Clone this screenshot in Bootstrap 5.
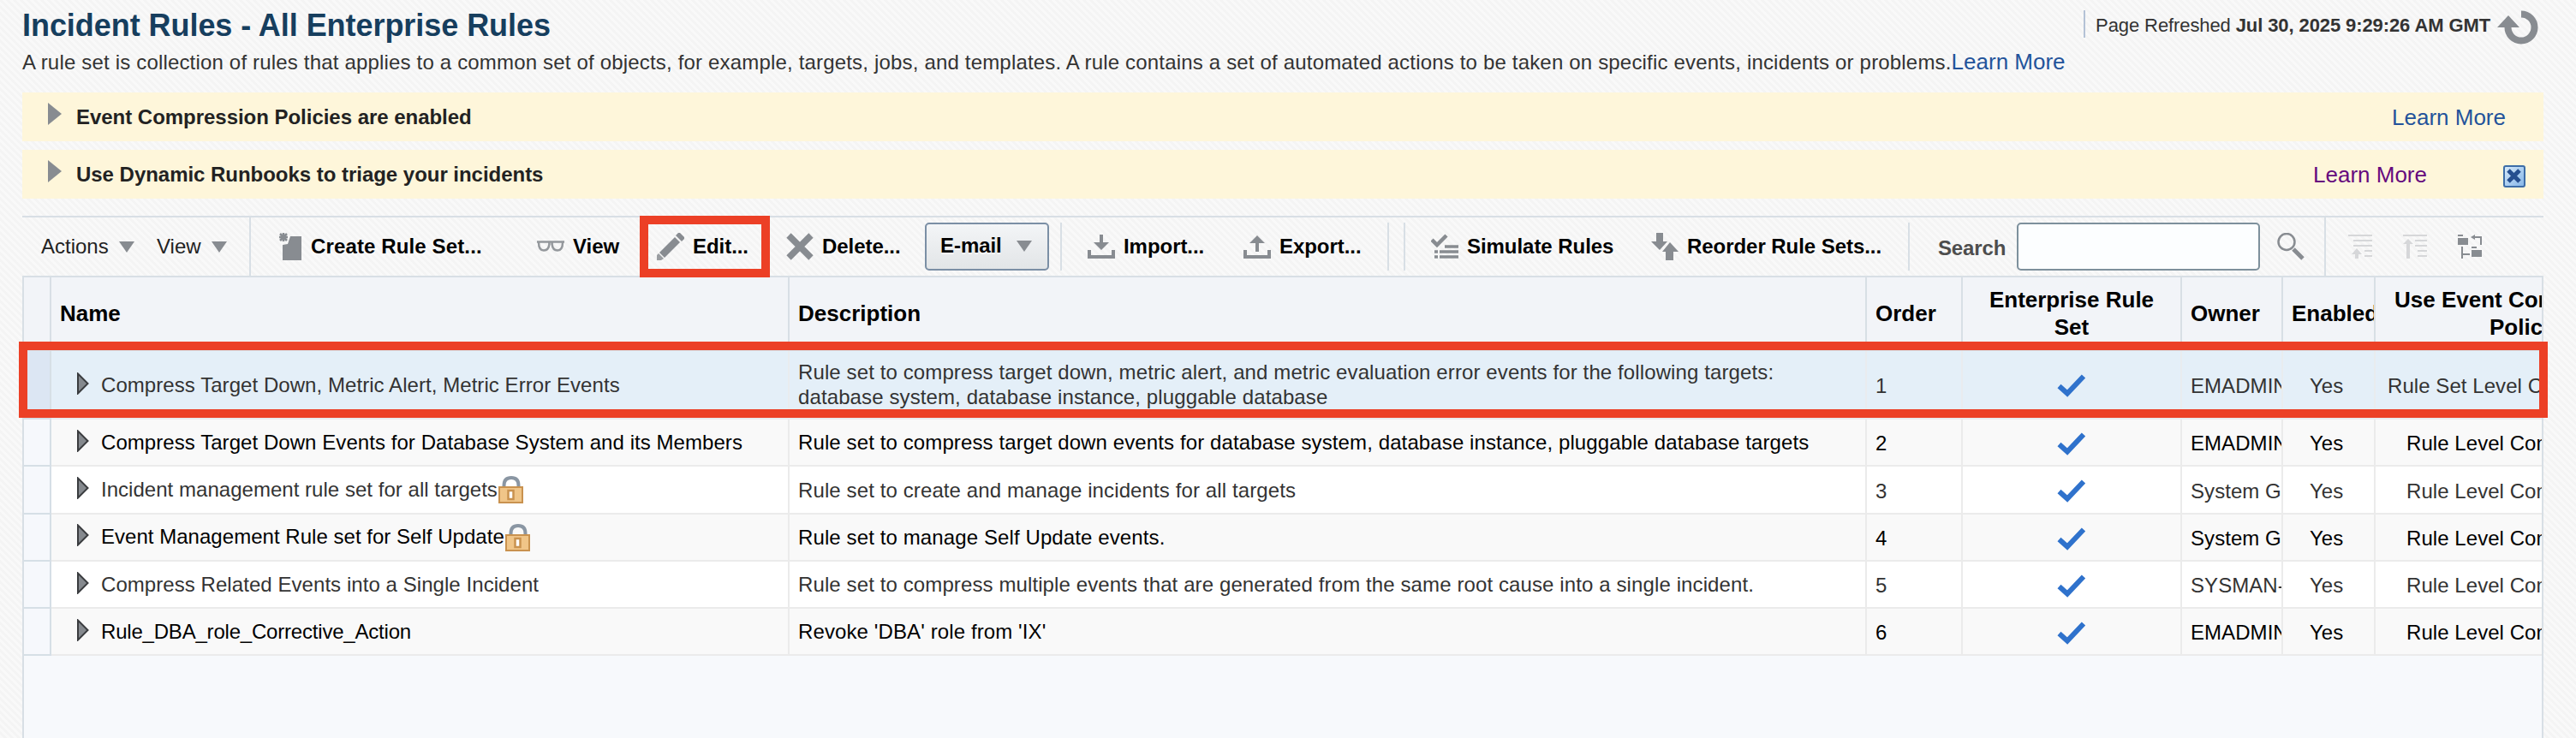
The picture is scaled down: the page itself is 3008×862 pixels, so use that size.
<!DOCTYPE html>
<html lang="en">
<head>
<meta charset="utf-8">
<title>Incident Rules - All Enterprise Rules</title>
<link rel="stylesheet" href="https://cdn.jsdelivr.net/npm/bootstrap@5.3.0/dist/css/bootstrap.min.css">
<style>
  body { width: 3008px; height: 862px; overflow: hidden; font: 24px/30px "Liberation Sans", Arial, sans-serif; color: #333;
    background: repeating-linear-gradient(45deg, #f9f9f9 0 2.83px, #f4f4f4 2.83px 5.66px); }
  a { text-decoration: none; color: #23539b; font-size: 26px; }
  a.visited { color: #660b7e; }
  svg { display: block; flex: none; }
  .page { padding: 0 38px 0 26px; height: 862px; }
  .page-head { height: 54px; padding-top: 10px; }
  .page-title { font-size: 36px; line-height: 40px; color: #163e5e; letter-spacing: -.05px; }
  .refreshed { font-size: 22px; height: 32px; margin: 2px 2px 0 0; padding-left: 12px; border-left: 2px solid #b4c2d6; letter-spacing: -.1px; }
  .refreshed > span { line-height: 30px; margin-top: 3px; white-space: pre; }
  .intro { height: 54px; padding-top: 3px; white-space: nowrap; }
  .intro span { letter-spacing: .177px; }
  .notice { height: 57px; background: #fef6da; padding-left: 30px; margin-bottom: 10px; color: #222; }
  .notice b { margin-left: 17px; letter-spacing: -.03px; }
  .notice svg.tri { margin-bottom: 8px; }
  .toolbar-grid { display: grid; height: 72px; margin-top: 20px; padding-left: 22px; border-top: 2px solid #d8dfe5; border-bottom: 2px solid #d8dfe5; color: #000; align-items: center; white-space: nowrap;
    grid-template-columns: 135px 108px 29px 307px 140px 151px 162px 158px 32px 182px 168px 19px 32px 257px 300px 35px 92px 304px 55px 27px 64px 65px 1fr; }
  .tool { display: flex; align-items: center; gap: 10px; font-weight: 700; letter-spacing: -.05px; text-shadow: 0 2px 0 #fff; }
  .tool-create { letter-spacing: .13px; gap: 11px; }
  .tool-menu { display: flex; align-items: center; gap: 12px; color: #222; }
  .rule-v { width: 2px; height: 56px; background: #d8dfe5; }
  .rule-full { height: 68px; }
  .mail-btn { width: 145px; height: 56px; border: 2px solid #7b8fa5; border-radius: 5px; padding: 0 18px 2px 16px; background: linear-gradient(#f3f5f7, #e2e5e7); justify-content: space-between; }
  .search-box { width: 284px; height: 56px; border: 2px solid #7d909c; border-radius: 5px; background: #fcfeff; padding: 0 8px; }
  .search-label { color: #4d4d4d; font-weight: 700; padding-top: 4px; letter-spacing: -.15px; }
  .frame { position: absolute; border: 10px solid #ec4026; pointer-events: none; }
  .frame-edit { left: -20px; top: -20px; width: 152px; height: 72px; }
  .frame-row { left: -4px; top: 75px; width: 2953px; height: 89px; }
  .rules-box { border: solid #d8dfe5; border-width: 0 2px; background: #f7f9fc; height: 538px; overflow: hidden; }
  .rules { width: 2940px; table-layout: fixed; border-collapse: separate; border-spacing: 0; margin: 0; }
  .rules th, .rules td { padding: 0 0 0 10px; overflow: hidden; white-space: nowrap; vertical-align: middle; border-right: 2px solid #ebebeb; border-bottom: 2px solid #ebebeb; }
  .rules th { height: 86px; font-size: 26px; line-height: 32px; color: #000; background: #f2f4f8; border-color: #d8dfe5; }
  .rules td { height: 55px; line-height: 29px; background: #fff; letter-spacing: .06px; }
  .rules td:first-child { background: #f6f8fc; border-color: #d6dfe6; }
  .rules td.about { letter-spacing: .11px; }
  .rules tr > :last-child { border-right: 0; }
  .rules tr.alt td { color: #000; background: #f9f9f9; }
  .rules tr.alt td:first-child { background: #f6f8fc; }
  .rules tr.sel td { height: 80px; background: #e4eff8; border-color: #e9ecef; }
  .rules tr.sel td:first-child { background: #dce6f3; border-color: #d6dfe6; }
  .rules tr.tall td { height: 56px; }
  .rules td.num { padding-top: 2px; }
  .rules td.pick { padding: 3px 0 0 110px; }
  .rules td.name { padding-left: 30px; }
  .rules tr.locked td.name { padding-bottom: 2px; letter-spacing: .03px; }
  .rules tr.locked .lk { margin-top: 2px; }
  .rules tr:last-child td.name { letter-spacing: -.2px; }
  .rules td.yes { padding: 2px 0 0 31px; }
  .rules td.pol { padding: 2px 0 0 36px; }
  .rules tr.sel td.pol { padding-left: 14px; }
  .name-in { display: flex; align-items: center; gap: 14px; }
  .name-in .tri { margin-bottom: 3px; }
  .name-in .lk { margin-left: -13px; }
  #learn-policies { margin-right: 44px; }
  #learn-runbooks { margin-right: 89px; }
  #close-note { margin: 5px 21px 0 0; }
  #th-policy { padding-left: 22px; }
  #th-policy span { margin-left: 111px; }
</style>
</head>
<body>
<svg class="d-none">
  <symbol id="tri" viewBox="0 0 14 26"><path d="M1 1.5V24.5L12.5 13Z" fill="#85898e" stroke="#3a3c3f" stroke-width="2"/></symbol>
  <symbol id="grey" viewBox="0 0 16 26"><path d="M0 0V26L16 13Z" fill="#888c91"/></symbol>
  <symbol id="down" viewBox="0 0 18 13"><path d="M0 0H18L9 13Z" fill="#888c91"/></symbol>
  <symbol id="check" viewBox="0 0 34 27"><path d="M2.5 14L12 22.5L31 2.5" fill="none" stroke="#2f72cc" stroke-width="6"/></symbol>
  <symbol id="lock" viewBox="0 0 30 32"><path d="M6.5 13V11Q6.5 2 15 2T23.500 11V13" fill="none" stroke="#8a96a3" stroke-width="4"/><path d="M1 13H28V31H1Z" fill="#f0c588" stroke="#c9924f" stroke-width="2"/><path d="M11.500 17H17.500V27H11.500Z" fill="#fff" stroke="#c9924f" stroke-width="2.500"/></symbol>
</svg>
<main class="page">
  <header class="page-head d-flex justify-content-between">
    <h1 class="page-title fw-bold mb-0">Incident Rules - All Enterprise Rules</h1>
    <div class="refreshed d-flex">
      <span>Page Refreshed <b>Jul 30, 2025 9:29:26 AM GMT</b></span>
      <svg width="48" height="40" viewBox="0 0 48 40" class="ms-2 me-1"><path d="M28 4.500A15.500 15.500 0 1 1 12.500 20" fill="none" stroke="#888c91" stroke-width="8"/><path d="M0 20H26L13 6Z" fill="#888c91"/></svg>
    </div>
  </header>
  <p class="intro mb-0"><span>A rule set is collection of rules that applies to a common set of objects, for example, targets, jobs, and templates. A rule contains a set of automated actions to be taken on specific events, incidents or problems.</span><a href="#">Learn More</a></p>
  <section class="notice d-flex align-items-center">
    <svg class="tri" width="16" height="26"><use href="#grey"/></svg><b>Event Compression Policies are enabled</b>
    <a href="#" class="ms-auto" id="learn-policies">Learn More</a>
  </section>
  <section class="notice d-flex align-items-center">
    <svg class="tri" width="16" height="26"><use href="#grey"/></svg><b>Use Dynamic Runbooks to triage your incidents</b>
    <a href="#" class="visited ms-auto" id="learn-runbooks">Learn More</a>
    <svg id="close-note" width="26" height="26" viewBox="0 0 26 26"><defs><linearGradient id="cg" x1="0" y1="0" x2="1" y2="1"><stop offset="0" stop-color="#d9ebfa"/><stop offset="1" stop-color="#83b5e8"/></linearGradient></defs><rect x="1" y="1" width="24" height="24" rx="2" fill="url(#cg)" stroke="#3c6da8" stroke-width="2"/><path d="M6 6L19 19M19 6L6 19" stroke="#264f8f" stroke-width="5"/></svg>
  </section>
  <nav class="toolbar-grid">
    <span class="tool-menu">Actions<svg width="18" height="13"><use href="#down"/></svg></span>
    <span class="tool-menu">View<svg width="18" height="13"><use href="#down"/></svg></span>
    <i class="rule-v rule-full"></i>
    <span class="tool tool-create"><svg width="32" height="32" viewBox="0 0 32 32" fill="#888c91"><path d="M19 4H32V32H10V14L16 13Z"/><path d="M11 0V10M6 5H16M7 1L15 9M15 1L7 9" stroke="#888c91" stroke-width="2.500"/></svg>Create Rule Set...</span>
    <span class="tool"><svg width="32" height="32" viewBox="0 0 32 32" fill="none" stroke="#94989c" stroke-width="2.500"><path d="M0 10.500H32M2 11C2 17 4 20.500 8 20.500S14 17 14.500 13Q14.500 11 13 11M30 11C30 17 28 20.500 24 20.500S18 17 17.500 13Q17.500 11 19 11"/></svg>View</span>
    <span class="tool position-relative"><svg width="32" height="32" viewBox="0 0 32 32" fill="#888c91"><path d="M3 23L21 5L27 11L9 29Z"/><path d="M22 3L25 0H27L32 5V7L29 10Z"/><path d="M0 32V26L2 24L8 30L5 32Z" fill="#9a9da1"/></svg>Edit...<i class="frame frame-edit"></i></span>
    <span class="tool"><svg width="32" height="32" viewBox="0 0 32 32"><path d="M3 3L29 29M29 3L3 29" stroke="#888c91" stroke-width="7.500"/></svg>Delete...</span>
    <span class="tool mail-btn">E-mail<svg width="18" height="13"><use href="#down"/></svg></span>
    <i class="rule-v"></i>
    <span class="tool"><svg width="32" height="32" viewBox="0 0 32 32" fill="#888c91"><path d="M14 2H18V11H25L16 20L7 11H14Z"/><path d="M0 20H4V26H28V20H32V30H0Z"/></svg>Import...</span>
    <span class="tool"><svg width="32" height="32" viewBox="0 0 32 32" fill="#888c91"><path d="M14 22H18V12H25L16 3L7 12H14Z"/><path d="M0 20H4V26H28V20H32V30H0Z"/></svg>Export...</span>
    <i class="rule-v"></i>
    <i class="rule-v"></i>
    <span class="tool"><svg width="32" height="32" viewBox="0 0 32 32" fill="none" stroke="#888c91" stroke-width="3.500"><path d="M1 8L7 14L18 3" stroke-width="4.500"/><path d="M16 16H32M10 22H32M10 28H32M4 22H8M4 28H8"/></svg>Simulate Rules</span>
    <span class="tool"><svg width="32" height="32" viewBox="0 0 32 32" fill="#888c91"><path d="M6 0H14V10H19L10 20L0 10H6Z"/><path d="M17 32H26V22H32L22 11L13 22H17Z"/></svg>Reorder Rule Sets...</span>
    <i class="rule-v"></i>
    <label class="search-label" for="q">Search</label>
    <input id="q" class="search-box" type="text">
    <svg width="32" height="32" viewBox="0 0 32 32" fill="none" stroke="#888c91"><circle cx="11" cy="10.500" r="9.500" stroke-width="2.500"/><path d="M19 19L30 30" stroke-width="5"/></svg>
    <i class="rule-v rule-full"></i>
    <svg width="30" height="32" viewBox="0 0 30 32" fill="none" stroke="#d6d7d9" stroke-width="2"><path d="M1 3H29M7 9H29M7 15H29M20 21H29M20 27H29"/><path d="M9 30V25H5L11 18L17 25H13V30Z" fill="#d6d7d9" stroke="none"/></svg>
    <svg width="30" height="32" viewBox="0 0 30 32" fill="none" stroke="#d6d7d9" stroke-width="2"><path d="M1 3H29M15 9H29M15 15H29M18 21H29M18 27H29"/><path d="M5 30V13H1L7 7L13 13H9V30Z" fill="#d6d7d9" stroke="none"/></svg>
    <svg width="30" height="32" viewBox="0 0 30 32" fill="#888c91"><path d="M0 2H6V4H0ZM0 6H12V14H0ZM16 16H22V18H16ZM16 20H28V28H16ZM15 5L20 2V4H28V14H26V6H20V8Z"/><path d="M5 16V30M5 25H14" fill="none" stroke="#888c91" stroke-width="2"/></svg>
  </nav>
  <div class="position-relative">
    <div class="rules-box">
      <table class="rules">
        <colgroup><col style="width:32px"><col style="width:862px"><col style="width:1258px"><col style="width:112px"><col style="width:256px"><col style="width:118px"><col style="width:108px"><col style="width:194px"></colgroup>
        <thead><tr><th></th><th>Name</th><th>Description</th><th>Order</th><th class="text-center ps-0">Enterprise Rule<br>Set</th><th>Owner</th><th>Enabled</th><th id="th-policy">Use Event Com<br><span>Policy</span></th></tr></thead>
        <tbody id="rows"></tbody>
      </table>
    </div>
    <i class="frame frame-row"></i>
  </div>
</main>
<script src="https://cdn.jsdelivr.net/npm/bootstrap@5.3.0/dist/js/bootstrap.bundle.min.js"></script>
<script>
  const rules = [
    ['Compress Target Down, Metric Alert, Metric Error Events', 'Rule set to compress target down, metric alert, and metric evaluation error events for the following targets:<br>database system, database instance, pluggable database', 'EMADMIN', 'sel', 'Rule Set Level C'],
    ['Compress Target Down Events for Database System and its Members', 'Rule set to compress target down events for database system, database instance, pluggable database targets', 'EMADMIN', 'alt'],
    ['Incident management rule set for all targets', 'Rule set to create and manage incidents for all targets', 'System G', 'tall locked', '', true],
    ['Event Management Rule set for Self Update', 'Rule set to manage Self Update events.', 'System G', 'alt locked', '', true],
    ['Compress Related Events into a Single Incident', 'Rule set to compress multiple events that are generated from the same root cause into a single incident.', 'SYSMAN-', ''],
    ['Rule_DBA_role_Corrective_Action', "Revoke 'DBA' role from 'IX'", 'EMADMIN', 'alt']
  ];
  document.getElementById('rows').innerHTML = rules.map(([name, text, owner, cls, policy, locked], i) => `
    <tr class="${cls}"><td></td>
      <td class="name"><div class="name-in"><svg class="tri" width="14" height="26"><use href="#tri"/></svg><span>${name}</span>${locked ? '<svg class="lk" width="30" height="32"><use href="#lock"/></svg>' : ''}</div></td>
      <td class="about">${text}</td><td class="num">${i + 1}</td>
      <td class="pick"><svg width="34" height="27"><use href="#check"/></svg></td>
      <td class="num">${owner}</td><td class="yes">Yes</td><td class="pol">${policy || 'Rule Level Com'}</td></tr>`).join('');
</script>
</body>
</html>
